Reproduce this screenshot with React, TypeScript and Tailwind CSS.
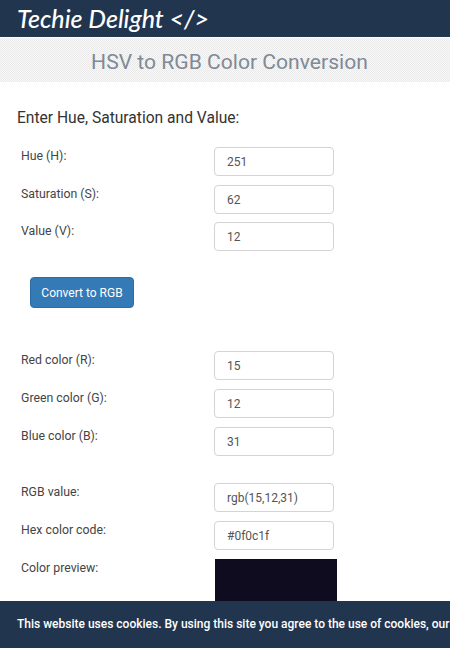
const sans = 'font-["Roboto",sans-serif]';

function Row({ label, value, className }: { label: string; value: string; className: string }) {
  return (
    <div className={`flex ${className}`}>
      <label className="w-[197px] pl-[4px] text-[12.3px] leading-[18px] text-[#444]">{label}</label>
      <div className="flex h-[29px] w-[120px] items-center rounded-[4px] border border-[#d4d4d4] bg-white pl-[12px] pt-px text-[12px] text-[#555]">
        {value}
      </div>
    </div>
  );
}

export default function App() {
  return (
    <div className={`relative h-[648px] w-[450px] overflow-hidden bg-white ${sans}`}>
      <header className="flex h-[37px] items-center bg-[#22354f] pl-[17px] font-['Lato',sans-serif] text-[25px] font-medium italic text-white">
        Techie Delight &lt;/&gt;
      </header>
      <div className="mt-px flex h-[44px] items-center justify-center bg-[#f2f2f2] bg-[repeating-conic-gradient(#f9f9f9_0_25%,#e9e9e9_0_50%)] bg-[length:2px_2px] pl-[9px] pt-[4px] text-[21.1px] text-[#7f8a96]">
        HSV to RGB Color Conversion
      </div>

      <main className="pl-[17px]">
        <h2 className="mt-[26px] text-[15.6px] leading-[20px] text-[#333]">Enter Hue, Saturation and Value:</h2>

        <Row label="Hue (H):" value="251" className="mt-[19px]" />
        <Row label="Saturation (S):" value="62" className="mt-[9px]" />
        <Row label="Value (V):" value="12" className="mt-[8px]" />

        <button className="ml-[13px] mt-[26px] flex h-[31px] w-[104px] items-center justify-center rounded-[4px] border border-[#2e6da4] bg-[#337ab7] text-[12px] text-white">
          Convert to RGB
        </button>

        <Row label="Red color (R):" value="15" className="mt-[43px]" />
        <Row label="Green color (G):" value="12" className="mt-[9px]" />
        <Row label="Blue color (B):" value="31" className="mt-[9px]" />

        <Row label="RGB value:" value="rgb(15,12,31)" className="mt-[27px]" />
        <Row label="Hex color code:" value="#0f0c1f" className="mt-[9px]" />

        <div className="mt-[9px] flex">
          <label className="w-[198px] pl-[4px] text-[12.3px] leading-[18px] text-[#444]">Color preview:</label>
          <div className="h-[60px] w-[122px] bg-[#0f0c1f]" />
        </div>
      </main>

      <div className="absolute bottom-0 left-0 flex h-[47px] w-full items-center whitespace-nowrap bg-[#22354f] pb-[2px] pl-[17px] text-[12px] font-medium text-white">
        This website uses cookies. By using this site you agree to the use of cookies, our
      </div>
    </div>
  );
}
